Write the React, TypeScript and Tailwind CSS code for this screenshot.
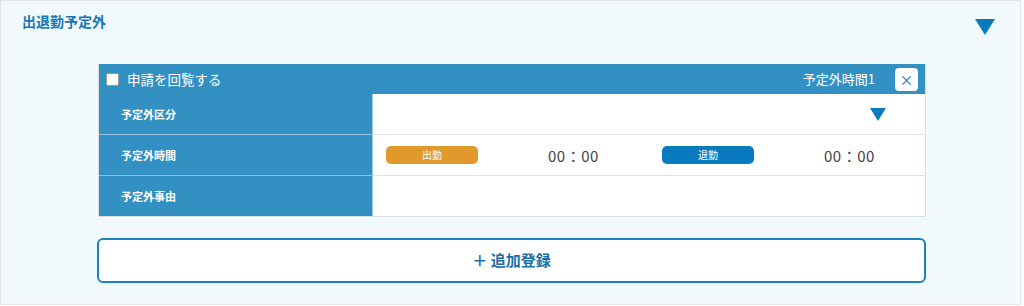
import React from 'react';

const font = { fontFamily: '"Noto Sans CJK JP", "Noto Sans", sans-serif' };

const Triangle: React.FC<{ className?: string }> = ({ className }) => (
  <svg viewBox="0 0 20 16" className={className}>
    <polygon points="0,0 20,0 10,16" fill="#0a7abf" />
  </svg>
);

const TimeSlot: React.FC<{ label: string; color: string }> = ({ label, color }) => (
  <div className="flex items-center pl-[13px]">
    <div className={`w-[92px] h-[18px] rounded-[5px] ${color} flex items-center justify-center text-[10px] text-white leading-none`}>
      {label}
    </div>
    <div className="ml-[70px] text-[15px] text-[#444] leading-none tracking-[0.5px]">00：00</div>
  </div>
);

const App: React.FC = () => {
  const rows = ['予定外区分', '予定外時間', '予定外事由'];

  return (
    <div style={font} className="w-[1021px] h-[305px] bg-[#f2f9fd] border border-[#e2e4e6]">
      {/* Section header */}
      <div className="flex items-start justify-between pl-[21px] pr-[25px] pt-[10px] h-[63px]">
        <h2 className="text-[14px] font-bold text-[#1677b3] leading-[20px]">出退勤予定外</h2>
        <Triangle className="w-[20px] h-[16px] mt-[8px]" />
      </div>

      {/* Table */}
      <div className="ml-[97px] w-[828px] border border-[#dcdfe2] border-t-0">
        <div className="h-[30px] bg-[#3390c3] flex items-center pl-[7px] pr-[7px]">
          <div className="w-[13px] h-[13px] bg-white rounded-[2px] border border-[#999]" />
          <span className="ml-[8px] text-[13.5px] text-white">申請を回覧する</span>
          <span className="ml-auto text-[13px] text-white">予定外時間1</span>
          <button className="ml-[20px] w-[23px] h-[23px] bg-white rounded-[4px] flex items-center justify-center text-[#1677b3] text-[14px] leading-none">
            ×
          </button>
        </div>
        {rows.map((r, i) => (
          <div key={r} className={`flex ${i > 0 ? 'h-[41px] border-t border-[#e0e2e4]' : 'h-[40px]'}`}>
            <div className={`w-[274px] bg-[#3390c3] text-white text-[11px] font-bold flex items-center pl-[22px] border-r border-[#9ec8e2] ${i > 0 ? 'border-t border-t-[#8fbfdc] -mt-px' : ''}`}>
              {r}
            </div>
            <div className="flex-1 bg-white">
              {i === 0 && (
                <div className="h-full flex items-center justify-end pr-[39px]">
                  <Triangle className="w-[16px] h-[13px] mt-[1px]" />
                </div>
              )}
              {i === 1 && (
                <div className="h-full grid grid-cols-2 items-center">
                  <TimeSlot label="出勤" color="bg-[#e0992a]" />
                  <TimeSlot label="退勤" color="bg-[#0a7abf]" />
                </div>
              )}
            </div>
          </div>
        ))}
      </div>

      {/* Add button */}
      <button className="mt-[21px] ml-[96px] w-[829px] h-[45px] bg-white border-2 border-[#1a80c0] rounded-[6px] flex items-center justify-center text-[15px] font-bold text-[#1b6ea8]">
        ＋ 追加登録
      </button>
    </div>
  );
};

export default App;
